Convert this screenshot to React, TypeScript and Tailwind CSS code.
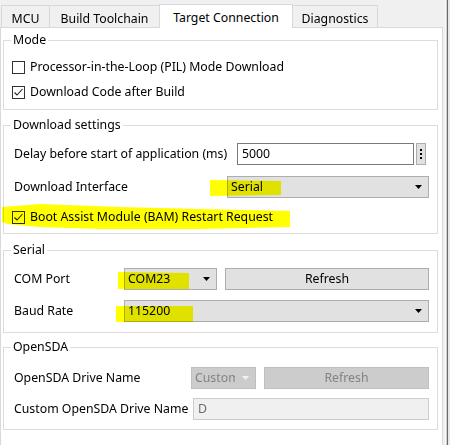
import React from "react";

const Check = ({ checked }: { checked?: boolean }) => (
  <span className="flex h-[13px] w-[13px] shrink-0 items-center justify-center border border-[#333333] bg-white">
    {checked && (
      <svg width="11" height="11" viewBox="0 0 11 11">
        <path d="M1.5 5.5 L4 8 L9.5 2" stroke="#222" strokeWidth="1.1" fill="none" />
      </svg>
    )}
  </span>
);

const Arrow = ({ light }: { light?: boolean }) => (
  <svg width="7" height="4" viewBox="0 0 7 4" className="shrink-0">
    <path d="M0 0H7L3.5 4Z" fill={light ? "#f2f2f2" : "#000"} />
  </svg>
);

const Combo = ({ value, className }: { value: string; className: string }) => (
  <div className={`flex h-[22px] items-center justify-between border border-[#adadad] bg-[#e1e1e1] pl-[3px] pr-[6px] ${className}`}>
    <span>{value}</span>
    <Arrow />
  </div>
);

const Tab = ({ label, w, selected, first }: { label: string; w: string; selected?: boolean; first?: boolean }) => (
  <div
    className={`flex items-start justify-center border border-b-0 border-[#d9d9d9] ${w} ${first ? "" : "-ml-px"} ${
      selected ? "relative z-10 -mb-px h-[24px] bg-white pt-[4px]" : "h-[22px] bg-[#f0f0f0] pt-[4px]"
    }`}
  >
    {label}
  </div>
);

const Group = ({ title, className, children }: { title: string; className: string; children: React.ReactNode }) => (
  <fieldset className={`ml-[2px] mr-[4px] border border-[#dcdcdc] pl-[8px] pr-[8px] ${className}`}>
    <legend className="-ml-px px-[2px] leading-[14px]">{title}</legend>
    {children}
  </fieldset>
);

export default function App() {
  return (
    <div className="relative isolate flex h-[445px] w-[450px] overflow-hidden bg-[#f0f0f0] font-['Noto_Sans',sans-serif] text-[12.3px] text-black">
      <div className="flex w-[443px] flex-col">
        <div className="flex h-[27px] items-end pl-[1px]">
          <Tab label="MCU" w="w-[49px]" first />
          <Tab label="Build Toolchain" w="w-[111px]" />
          <Tab label="Target Connection" w="w-[134px]" selected />
          <Tab label="Diagnostics" w="w-[86px]" />
        </div>
        <div className="flex-1 border border-b-0 border-[#d9d9d9] bg-white">
          <Group title="Mode" className="mt-[5px] pt-[10px] pb-[7px]">
            <div className="flex flex-col gap-[5px]">
              <div className="flex h-[20px] items-center gap-[5px]">
                <Check />
                <span>Processor-in-the-Loop (PIL) Mode Download</span>
              </div>
              <div className="flex h-[20px] items-center gap-[5px]">
                <Check checked />
                <span>Download Code after Build</span>
              </div>
            </div>
          </Group>

          <Group title="Download settings" className="mt-[8px] pt-[11px] pb-[6px]">
            <div className="flex h-[22px] items-center">
              <span className="w-[225px] shrink-0 pl-[2px]">Delay before start of application (ms)</span>
              <div className="flex h-[22px] flex-1 items-center border border-[#7a7a7a] bg-white pl-[4px]">5000</div>
              <div className="ml-[2px] mr-[3px] flex h-[22px] w-[10px] flex-col items-center justify-center gap-[2px] border border-[#adadad] bg-[#e1e1e1]">
                <span className="h-[2px] w-[2px] bg-black" />
                <span className="h-[2px] w-[2px] bg-black" />
                <span className="h-[2px] w-[2px] bg-black" />
              </div>
            </div>
            <div className="mt-[11px] flex h-[22px] items-center">
              <span className="w-[215px] shrink-0 pl-[2px]">Download Interface</span>
              <Combo value="Serial" className="flex-1" />
            </div>
            <div className="mt-[9px] flex h-[20px] items-center gap-[5px]">
              <Check checked />
              <span>Boot Assist Module (BAM) Restart Request</span>
            </div>
          </Group>

          <Group title="Serial" className="mt-[9px] pt-[11px] pb-[10px]">
            <div className="flex h-[22px] items-center">
              <span className="w-[112px] shrink-0 pl-[2px]">COM Port</span>
              <Combo value="COM23" className="w-[93px]" />
              <div className="ml-[8px] flex h-[22px] flex-1 items-center justify-center border border-[#adadad] bg-[#e1e1e1]">
                Refresh
              </div>
            </div>
            <div className="mt-[10px] flex h-[22px] items-center">
              <span className="w-[112px] shrink-0 pl-[2px]">Baud Rate</span>
              <Combo value="115200" className="flex-1" />
            </div>
          </Group>

          <Group title="OpenSDA" className="mt-[7px] pt-[13px] pb-[9px]">
            <div className="flex h-[22px] items-center">
              <span className="w-[179px] shrink-0 pl-[2px]">OpenSDA Drive Name</span>
              <div className="flex h-[22px] w-[65px] items-center justify-between overflow-hidden border border-[#bfbfbf] bg-[#cccccc] pl-[3px] pr-[6px] text-[#838383]">
                <span className="w-[40px] overflow-hidden whitespace-nowrap">Custom</span>
                <Arrow light />
              </div>
              <div className="ml-[8px] flex h-[22px] flex-1 items-center justify-center border border-[#bfbfbf] bg-[#cccccc] text-[#838383]">
                Refresh
              </div>
            </div>
            <div className="mt-[9px] flex h-[22px] items-center">
              <span className="w-[181px] shrink-0 pl-[2px]">Custom OpenSDA Drive Name</span>
              <div className="flex h-[22px] flex-1 items-center border border-[#cccccc] bg-[#f0f0f0] pl-[4px] text-[#6d6d6d]">D</div>
            </div>
          </Group>
        </div>
      </div>
      <div className="flex w-[7px]">
        <div className="w-[2px] bg-[#f0f0f0]" />
        <div className="w-[1px] bg-[#fafafa]" />
        <div className="w-[1px] bg-[#d0d0d0]" />
        <div className="w-[1px] bg-[#6a6a6a]" />
        <div className="w-[2px] bg-[#e8e8e8]" />
      </div>

      <svg className="pointer-events-none absolute left-0 top-0 mix-blend-multiply" width="450" height="445" viewBox="0 0 450 445">
        <polygon points="210,180 281,181 281,195 210,196" fill="#ffff00" />
        <polygon points="2,207 40,204 120,207 200,209 290,211 290,227 200,229 100,229 40,227 8,224 2,222" fill="#ffff00" />
        <polygon points="118,272 189,273 189,289 118,289" fill="#ffff00" />
        <polygon points="116,306 193,306 193,322 116,322" fill="#ffff00" />
      </svg>
    </div>
  );
}
